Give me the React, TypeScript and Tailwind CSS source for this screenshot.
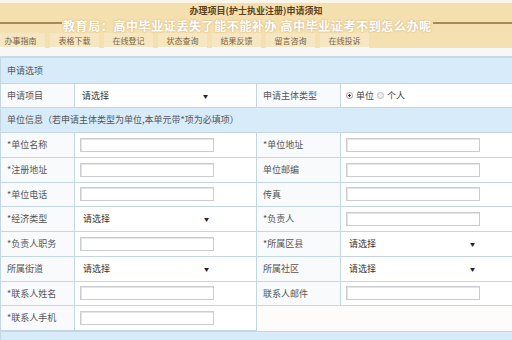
import React from 'react'

const font = { fontFamily: '"Noto Sans CJK SC", "Noto Sans", sans-serif' }

const tabs = ['办事指南', '表格下载', '在线登记', '状态查询', '结果反馈', '留言咨询', '在线投诉']

type Cell = { label: string; kind: 'input' | 'select' | 'radio' | 'none' }

const rows: [Cell, Cell | null][] = [
  [{ label: '*单位名称', kind: 'input' }, { label: '*单位地址', kind: 'input' }],
  [{ label: '*注册地址', kind: 'input' }, { label: '单位邮编', kind: 'input' }],
  [{ label: '*单位电话', kind: 'input' }, { label: '传真', kind: 'input' }],
  [{ label: '*经济类型', kind: 'select' }, { label: '*负责人', kind: 'input' }],
  [{ label: '*负责人职务', kind: 'input' }, { label: '*所属区县', kind: 'select' }],
  [{ label: '所属街道', kind: 'select' }, { label: '所属社区', kind: 'select' }],
  [{ label: '*联系人姓名', kind: 'input' }, { label: '联系人邮件', kind: 'input' }],
  [{ label: '*联系人手机', kind: 'input' }, null],
]

const Field = ({ kind }: { kind: Cell['kind'] }) => {
  if (kind === 'input')
    return <div className="h-[14px] w-[134px] border border-[#c9cdd2] bg-white shadow-[inset_1px_1px_0_#e4e4e4]" />
  if (kind === 'select')
    return (
      <div className="flex w-[134px] items-center justify-between pl-[3px] pr-[5px] text-[9px] text-[#333]">
        <span>请选择</span>
        <span className="text-[5px] text-[#222]">▼</span>
      </div>
    )
  if (kind === 'radio')
    return (
      <div className="flex items-center gap-[3px] text-[9px] text-[#444]">
        <span className="h-[7px] w-[7px] rounded-full border border-[#999] bg-[radial-gradient(circle,#333_30%,#fff_40%)]" />
        <span>单位</span>
        <span className="h-[7px] w-[7px] rounded-full border border-[#bbb] bg-[#eee]" />
        <span>个人</span>
      </div>
    )
  return null
}

export default function App() {
  return (
    <div className="h-[340px] w-[512px] overflow-hidden bg-white" style={font}>
      {/* Banner */}
      <div className="h-[3px] bg-[#fbf6ea]" />
      <div className="relative h-[45px] overflow-hidden bg-[linear-gradient(#f4dfae,#f5e0b2)] pt-[2px]">
        <div className="mb-[6px] text-center text-[9px] font-bold leading-[11px] text-[#5c4220]">
          办理项目(护士执业注册)申请须知
        </div>
        <div className="h-[2px] bg-[#a8875a]" />
        {/* overlay title */}
        <div className="absolute left-[62px] top-[16px] bg-[#f4dfae] px-[1px] text-[12px] font-bold leading-[14px] tracking-[0.6px] text-white [text-shadow:0_0_2px_#c9a66a]">
          教育局：高中毕业证丢失了能不能补办 高中毕业证考不到怎么办呢
        </div>
        <div className="ml-[-4px] mt-[9px] flex gap-[5px]">
          {tabs.map(t => (
            <div
              key={t}
              className="flex h-[15px] w-[49px] items-center justify-center border-b border-[#fffaf0] bg-[#f6e6c2] text-[8px] leading-[9px] text-[#7a6440]"
            >
              {t}
            </div>
          ))}
        </div>
      </div>
      <div className="h-[8px] bg-[#f7f7f7]" />
      <div className="h-[2px] bg-[#c5dbe9]" />

      {/* Form table */}
      <div className="border-l border-[#c3d6e4] text-[9px] text-[#555]">
        <div className="flex h-[26px] items-center border-b border-[#c3d6e4] bg-[#d8ebf9] pl-[6px]">申请选项</div>
        <div className="grid h-[24px] grid-cols-[74px_182px_84px_172px] border-b border-[#c3d6e4]">
          <div className="flex items-center border-r border-[#c3d6e4] bg-[#f8fafc] pl-[6px]">申请项目</div>
          <div className="flex items-center border-r border-[#c3d6e4] pl-[4px]">
            <Field kind="select" />
          </div>
          <div className="flex items-center border-r border-[#c3d6e4] bg-[#f8fafc] pl-[6px]">申请主体类型</div>
          <div className="flex items-center pl-[5px]">
            <Field kind="radio" />
          </div>
        </div>
        <div className="flex h-[25px] items-center border-b border-[#c3d6e4] bg-[#d8ebf9] pl-[6px]">
          单位信息（若申请主体类型为单位,本单元带*项为必填项）
        </div>
        {rows.map(([l, r], i) => (
          <div key={i} className="grid h-[24.75px] grid-cols-[74px_182px_84px_172px]">
            <div className="flex items-center border-r border-b border-[#c3d6e4] bg-[#f8fafc] pl-[6px]">{l.label}</div>
            <div className="flex items-center border-r border-b border-[#c3d6e4] pl-[5px]">
              <Field kind={l.kind} />
            </div>
            {r ? (
              <>
                <div className="flex items-center border-r border-b border-[#c3d6e4] bg-[#f8fafc] pl-[6px]">{r.label}</div>
                <div className="flex items-center border-b border-[#c3d6e4] pl-[5px]">
                  <Field kind={r.kind} />
                </div>
              </>
            ) : (
              <div className="col-span-2 bg-[#fdfcfb]" />
            )}
          </div>
        ))}
        <div className="h-[12px] border-t border-[#c3d6e4] bg-[#d8ebf9]" />
      </div>
    </div>
  )
}
